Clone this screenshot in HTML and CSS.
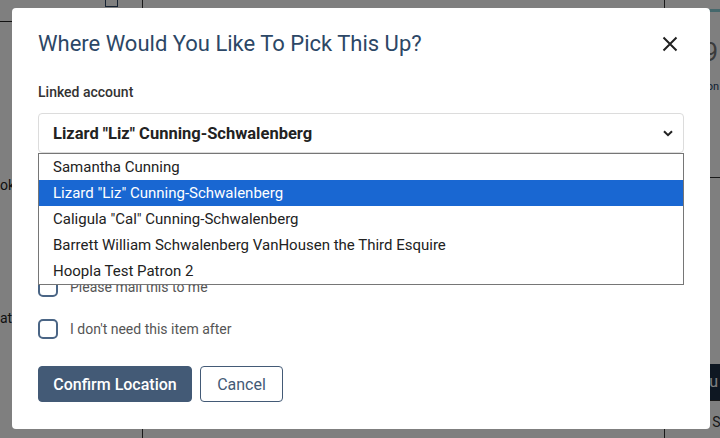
FILE: index.html
```html
<!DOCTYPE html>
<html lang="en">
<head>
    <meta charset="UTF-8">
    <meta name="viewport" content="width=device-width, initial-scale=1.0">
    <title>Place Hold - Pickup Location</title>
    <link rel="stylesheet" href="styles.css">
</head>
<body>
    <!-- page behind the dialog -->
    <div class="page">
        <div class="side">
            <div class="side-head">
                <span class="side-icon"></span>
            </div>
            <p class="side-link side-look">ok</p>
            <p class="side-link side-update">ate</p>
        </div>
        <div class="content"></div>
        <div class="aside">
            <div class="aside-strip"></div>
            <p class="price">$0.99</p>
            <p class="aside-note">Location</p>
            <hr class="aside-rule">
            <div class="aside-btn">Menu</div>
            <p class="aside-find">Find S</p>
        </div>
    </div>

    <div class="backdrop">
        <div class="modal">
            <div class="modal-header">
                <h2>Where Would You Like To Pick This Up?</h2>
                <button class="close-btn" aria-label="Close">
                    <svg width="16" height="16" viewBox="0 0 16 16">
                        <path d="M1.5 1.5 L14.5 14.5 M14.5 1.5 L1.5 14.5" stroke="#212121" stroke-width="2" fill="none"/>
                    </svg>
                </button>
            </div>

            <label class="field-label">Linked account</label>
            <div class="select-wrap">
                <div class="select-box">
                    <span>Lizard "Liz" Cunning-Schwalenberg</span>
                    <svg width="10" height="7" viewBox="0 0 10 7">
                        <path d="M1 1.2 L5 5.2 L9 1.2" stroke="#222" stroke-width="2" fill="none"/>
                    </svg>
                </div>
                <ul class="select-list">
                    <li>Samantha Cunning</li>
                    <li class="selected">Lizard "Liz" Cunning-Schwalenberg</li>
                    <li>Caligula "Cal" Cunning-Schwalenberg</li>
                    <li>Barrett William Schwalenberg VanHousen the Third Esquire</li>
                    <li>Hoopla Test Patron 2</li>
                </ul>
            </div>

            <div class="check-row first">
                <span class="checkbox"></span>
                <span>Please mail this to me</span>
            </div>
            <div class="check-row">
                <span class="checkbox"></span>
                <span>I don't need this item after</span>
            </div>

            <div class="actions">
                <button class="btn-primary">Confirm Location</button>
                <button class="btn-outline">Cancel</button>
            </div>
        </div>
    </div>
</body>
</html>
```

FILE: styles.css
```css
body {
    margin: 0;
    font-family: Roboto, "Liberation Sans", Arial, sans-serif;
    background: #fff;
    color: #222;
    overflow: hidden;
    height: 438px;
}

/* background page */
.page {
    display: grid;
    grid-template-columns: 143px 1fr 56px;
    height: 100%;
}

.side {
    border-right: 1px solid #333;
}

.side-head {
    height: 21px;
    border-bottom: 1px solid #222;
    position: relative;
}

.side-icon {
    position: absolute;
    left: 105px;
    top: -4px;
    width: 13px;
    height: 11px;
    border: 1px solid #2c4766;
    box-sizing: border-box;
}

.side-link {
    margin: 0;
    font-size: 14px;
    color: #222;
}

.side-look {
    margin-top: 155px;
}

.side-update {
    margin-top: 117px;
}

.aside {
    border-left: 1px solid #333;
}

.aside-strip {
    margin-top: 9px;
    height: 3px;
    background: #8ad0d8;
}

.price,
.aside-note,
.aside-btn {
    display: flex;
    justify-content: flex-end;
    white-space: nowrap;
}

.price {
    margin: 26px 2px 0 0;
    font-size: 26px;
    line-height: 28px;
    color: #777;
}

.aside-note {
    margin: 14px 1px 0 0;
    font-size: 11px;
    color: #1d3e66;
}

.aside-rule {
    margin: 84px 0 0 0;
    border: none;
    border-top: 1px solid #333;
}

.aside-btn {
    margin-top: 186px;
    height: 36px;
    background: #1d2e44;
    color: #fff;
    font-size: 16px;
    line-height: 36px;
    padding-right: 2px;
    border-bottom: 1px solid #333;
}

.aside-find {
    margin: 13px 0 0 17px;
    font-size: 14px;
    color: #333;
    white-space: nowrap;
}

/* dialog */
.backdrop {
    position: fixed;
    inset: 0;
    background: rgba(0, 0, 0, 0.5);
    padding: 8px 10px 0 12px;
}

.modal {
    width: 698px;
    height: 421px;
    box-sizing: border-box;
    background: #fff;
    border-radius: 4px;
    padding: 23px 26px 26px 26px;
}

.modal-header {
    display: flex;
    justify-content: space-between;
    align-items: center;
}

.modal-header h2 {
    margin: 0;
    font-size: 22px;
    line-height: 26px;
    font-weight: 400;
    color: #2c4766;
}

.close-btn {
    background: none;
    border: none;
    padding: 0;
    margin-right: 6px;
    width: 16px;
    height: 16px;
    cursor: pointer;
}

.field-label {
    display: block;
    margin-top: 27px;
    font-size: 14px;
    line-height: 16px;
    font-weight: 500;
    color: #333;
}

.select-wrap {
    position: relative;
    margin-top: 13px;
}

.select-box {
    height: 40px;
    box-sizing: border-box;
    border: 1px solid #dcdcdc;
    border-radius: 4px;
    display: flex;
    align-items: center;
    justify-content: space-between;
    padding: 0 10px 0 14px;
    font-size: 16.5px;
    font-weight: 700;
    color: #222;
}

.select-list {
    position: absolute;
    top: 40px;
    left: 0;
    right: 0;
    margin: 0;
    padding: 0;
    list-style: none;
    background: #fff;
    border: 1px solid #767676;
    z-index: 10;
}

.select-list li {
    height: 26px;
    line-height: 26px;
    padding-left: 14px;
    font-size: 15px;
    color: #222;
}

.select-list li.selected {
    background: #1967d2;
    color: #fff;
}

.check-row {
    display: flex;
    align-items: center;
    gap: 12px;
    height: 20px;
    margin-top: 22px;
    font-size: 14px;
    color: #555;
}

.check-row.first {
    margin-top: 124px;
}

.checkbox {
    width: 20px;
    height: 20px;
    box-sizing: border-box;
    border: 2px solid #4a6585;
    border-radius: 5px;
}

.actions {
    display: flex;
    gap: 8px;
    margin-top: 27px;
}

.actions button {
    height: 36px;
    border-radius: 4px;
    font-family: inherit;
    font-size: 16px;
    white-space: nowrap;
    padding: 0;
    cursor: pointer;
}

.btn-primary {
    background: #435a76;
    border: 1px solid #435a76;
    color: #fff;
    font-weight: 500;
    width: 154px;
}

.btn-outline {
    background: #fff;
    border: 1px solid #435a76;
    color: #435a76;
    width: 83px;
}
```
